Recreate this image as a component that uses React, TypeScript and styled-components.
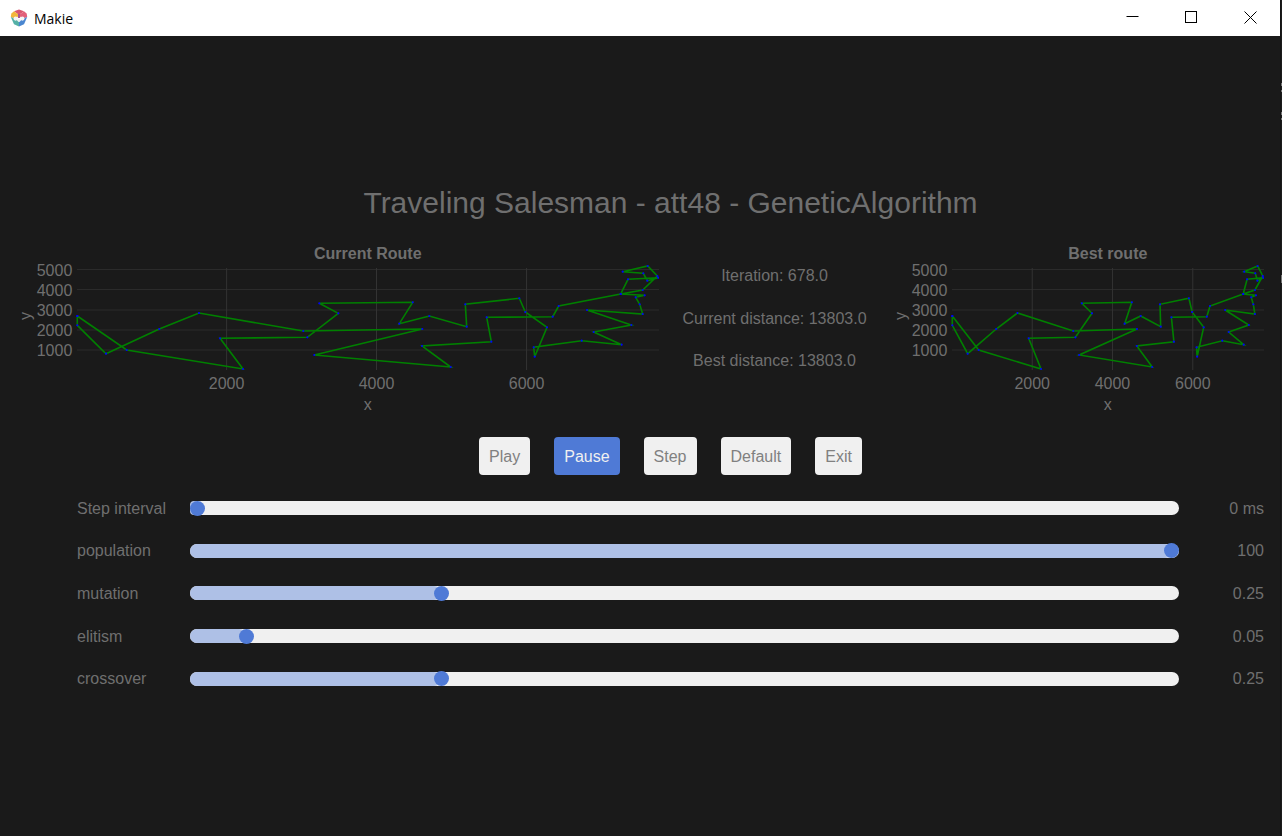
import React from "react";
import styled, { createGlobalStyle } from "styled-components";

const Global = createGlobalStyle`
  html, body { margin: 0; padding: 0; background: #1a1a1a; }
  body { font-family: "Liberation Sans", Arial, sans-serif; overflow: hidden; }
`;

const Screen = styled.div`
  width: 1282px;
  height: 836px;
  display: flex;
  background: #1a1a1a;
  overflow: hidden;
`;

const Edge = styled.div`
  position: relative;
  width: 2px;
  background: #1c1c1c;
  border-left: 1px solid #141414;
  box-sizing: border-box;
`;

const EdgeMark = styled.i<{ $top: number; $height: number }>`
  position: absolute;
  left: 0;
  width: 1px;
  top: ${(p) => p.$top}px;
  height: ${(p) => p.$height}px;
  background: #777;
`;

const Window = styled.div`
  width: 1280px;
  display: flex;
  flex-direction: column;
`;

const TitleBar = styled.header`
  height: 36px;
  background: #fff;
  display: flex;
  align-items: center;
  padding-left: 10px;
  flex: none;
`;

const AppName = styled.span`
  margin-left: 6px;
  font-family: "Open Sans", "Noto Sans", sans-serif;
  font-size: 14px;
  color: #000;
  flex: 1;
`;

const WinButton = styled.div`
  width: 59px;
  height: 36px;
  display: flex;
  align-items: center;
  justify-content: center;
  padding-bottom: 1px;
  box-sizing: border-box;
`;

const Content = styled.main`
  flex: 1;
  padding: 148px 16px 0 77px;
  display: flex;
  flex-direction: column;
  color: #6f6f6f;
`;

const Heading = styled.h1`
  margin: 0;
  height: 36px;
  line-height: 37px;
  font-size: 30px;
  font-weight: 400;
  text-align: center;
  white-space: nowrap;
`;

const PlotRow = styled.section`
  display: flex;
  margin-top: 22px;
  height: 170px;
`;

const ChartSvg = styled.svg<{ $bleed?: boolean }>`
  display: block;
  flex: none;
  margin-left: ${(p) => (p.$bleed ? "-62px" : "0")};
  font-family: "Liberation Sans", Arial, sans-serif;
`;

const TickText = styled.text`
  font-size: 16px;
  fill: #6f6f6f;
`;

const ChartTitle = styled.text`
  font-size: 16px;
  font-weight: 700;
  fill: #6f6f6f;
`;

const Stats = styled.div`
  width: 231px;
  flex: none;
  padding-top: 13px;
  display: flex;
  flex-direction: column;
  align-items: center;
`;

const Stat = styled.div`
  height: 42.5px;
  line-height: 42.5px;
  font-size: 16px;
  white-space: nowrap;
`;

const ButtonRow = styled.div`
  display: flex;
  justify-content: center;
  gap: 24px;
  margin-top: 25px;
`;

const ActionButton = styled.button<{ $active?: boolean }>`
  height: 38px;
  padding: 1px 10px 0;
  border: none;
  border-radius: 4px;
  font-family: "Liberation Sans", Arial, sans-serif;
  font-size: 16px;
  background: ${(p) => (p.$active ? "#4f7ad6" : "#f0f0f0")};
  color: ${(p) => (p.$active ? "#f0f0f0" : "#808080")};
`;

const SliderList = styled.div`
  margin-top: 12px;
  display: flex;
  flex-direction: column;
`;

const SliderRow = styled.div`
  height: 42.6px;
  display: grid;
  grid-template-columns: 113px 989px 1fr;
  align-items: center;
  font-size: 16px;
`;

const SliderLabel = styled.span`
  padding-top: 1px;
  white-space: nowrap;
`;

const SliderValue = styled.span`
  padding-top: 1px;
  text-align: right;
  white-space: nowrap;
`;

const Track = styled.div`
  position: relative;
  height: 14px;
  border-radius: 7px;
  background: #f0f0f0;
`;

const TrackFill = styled.div`
  height: 100%;
  border-radius: 7px;
  background: #aec0e6;
`;

const Thumb = styled.div`
  position: absolute;
  top: -0.5px;
  width: 15px;
  height: 15px;
  margin-left: -7.5px;
  border-radius: 50%;
  background: #4f7ad6;
`;

// route vertices, as screen positions measured off the "Current Route" plot
const ROUTE: [number, number][] = [
  [77.3, 316], [126.7, 350], [243, 369], [220, 338.3], [307.3, 337.3], [338.3, 313.3],
  [319.3, 303.3], [412.7, 302.3], [399.3, 323.7], [429.3, 316], [466.7, 326.7], [465.3, 304.3],
  [519.3, 298.3], [525.3, 312], [547, 327.3], [534.7, 356.7], [533.7, 347.3], [581.7, 340.7],
  [621.7, 344.7], [593.7, 332], [631.3, 325], [587, 310], [642.7, 314], [639.7, 304.3],
  [635.7, 297.3], [644.7, 295.3], [620.7, 294], [628, 279.3], [658.3, 277.7], [647.3, 280.7],
  [643.3, 273.3], [622.7, 271.7], [647.7, 266], [657.3, 276], [642.7, 290], [620.7, 294],
  [558.7, 306], [552.7, 316.7], [486.7, 317.3], [491.3, 341.7], [422, 346], [450.7, 367],
  [314.3, 355], [422.3, 329], [303.3, 331], [199, 313], [159.3, 329], [106, 353.7],
  [77.3, 325.3], [77.3, 316],
];

const X_TICKS = [
  { label: "2000", frac: 0.257 },
  { label: "4000", frac: 0.515 },
  { label: "6000", frac: 0.7733 },
];
const Y_TICKS = [
  { label: "5000", y: 27.5 },
  { label: "4000", y: 47.5 },
  { label: "3000", y: 68 },
  { label: "2000", y: 88 },
  { label: "1000", y: 108 },
];

const GUTTER = 62.3;

function Chart({ title, width, bleed }: { title: string; width: number; bleed?: boolean }) {
  const plotW = width - GUTTER - 0.7;
  const px = (x: number) => GUTTER + ((x - 77.3) / 581) * plotW;
  const py = (y: number) => y - 242;
  const mid = GUTTER + plotW / 2;
  const points = ROUTE.map(([x, y]) => `${px(x).toFixed(1)},${py(y).toFixed(1)}`).join(" ");
  return (
    <ChartSvg $bleed={bleed} width={width} height={170} viewBox={`0 0 ${width} 170`}>
      <ChartTitle x={mid} y={16.5} textAnchor="middle">{title}</ChartTitle>
      {Y_TICKS.map((t) => (
        <line key={t.label} x1={GUTTER - 0.3} x2={width} y1={t.y} y2={t.y} stroke="#2b2b2b" strokeWidth={1} />
      ))}
      {X_TICKS.map((t) => {
        const x = GUTTER + t.frac * plotW;
        return <line key={t.label} x1={x} x2={x} y1={26} y2={128} stroke="#333" strokeWidth={1} />;
      })}
      <polyline points={points} fill="none" stroke="#008000" strokeWidth={1.6} strokeLinejoin="miter" />
      {ROUTE.map(([x, y], i) => (
        <circle key={i} cx={px(x)} cy={py(y)} r={1.1} fill="#0000ff" />
      ))}
      {Y_TICKS.map((t) => (
        <TickText key={t.label} x={GUTTER - 5} y={t.y + 6} textAnchor="end">{t.label}</TickText>
      ))}
      {X_TICKS.map((t) => (
        <TickText key={t.label} x={GUTTER + t.frac * plotW} y={147} textAnchor="middle">{t.label}</TickText>
      ))}
      <TickText x={mid} y={168} textAnchor="middle">x</TickText>
      <TickText x={0} y={0} textAnchor="middle" transform={`translate(${GUTTER - 46.5} 74) rotate(-90)`}>y</TickText>
    </ChartSvg>
  );
}

const SLIDERS = [
  { label: "Step interval", value: "0 ms", frac: 0 },
  { label: "population", value: "100", frac: 1 },
  { label: "mutation", value: "0.25", frac: 0.25 },
  { label: "elitism", value: "0.05", frac: 0.05 },
  { label: "crossover", value: "0.25", frac: 0.25 },
];

const EDGE_MARKS = [
  { top: 83, height: 3 },
  { top: 90, height: 2 },
  { top: 112, height: 3 },
  { top: 118, height: 2 },
  { top: 275, height: 8 },
];

const Logo = () => (
  <svg width="18" height="18" viewBox="0 0 18 18">
    <path d="M9 0.5 L14 2.2 L9 6 L4 2.2 Z" fill="#d9566e" />
    <path d="M4 2.2 L9 6 L6 10 L0.8 8 L1.3 4.6 Z" fill="#f2b63c" />
    <path d="M14 2.2 L9 6 L12 10 L17.2 8 L16.7 4.6 Z" fill="#e2607a" />
    <path d="M0.8 8 L6 10 L9 13 L9 17.5 L4 15.2 Z" fill="#54b0a6" />
    <path d="M17.2 8 L12 10 L9 13 L9 17.5 L14 15.2 Z" fill="#4a86d0" />
    <path d="M9 5 V9" stroke="#a9558f" strokeWidth="2" />
    <circle cx="5.6" cy="9.6" r="2.1" fill="#f4f4f4" />
    <circle cx="12.4" cy="9.6" r="2.1" fill="#f4f4f4" />
    <circle cx="9" cy="11.2" r="1.5" fill="#f0f0f0" />
  </svg>
);

export default function App() {
  return (
    <Screen>
      <Global />
      <Window>
        <TitleBar>
          <Logo />
          <AppName>Makie</AppName>
          <WinButton>
            <svg width="13" height="13" viewBox="0 0 13 13"><path d="M0.5 5.5H12.5" stroke="#000" strokeWidth="1" fill="none" /></svg>
          </WinButton>
          <WinButton>
            <svg width="13" height="13" viewBox="0 0 13 13"><rect x="0.5" y="0.5" width="11" height="11" stroke="#000" strokeWidth="1" fill="none" /></svg>
          </WinButton>
          <WinButton>
            <svg width="13" height="13" viewBox="0 0 13 13"><path d="M0.5 0.5L12.5 12.5M12.5 0.5L0.5 12.5" stroke="#000" strokeWidth="1" fill="none" /></svg>
          </WinButton>
        </TitleBar>
        <Content>
          <Heading>Traveling Salesman - att48 - GeneticAlgorithm</Heading>
          <PlotRow>
            <Chart title="Current Route" width={644} bleed />
            <Stats>
              <Stat>Iteration: 678.0</Stat>
              <Stat>Current distance: 13803.0</Stat>
              <Stat>Best distance: 13803.0</Stat>
            </Stats>
            <Chart title="Best route" width={374} />
          </PlotRow>
          <ButtonRow>
            <ActionButton>Play</ActionButton>
            <ActionButton $active>Pause</ActionButton>
            <ActionButton>Step</ActionButton>
            <ActionButton>Default</ActionButton>
            <ActionButton>Exit</ActionButton>
          </ButtonRow>
          <SliderList>
            {SLIDERS.map((s) => (
              <SliderRow key={s.label}>
                <SliderLabel>{s.label}</SliderLabel>
                <Track>
                  <TrackFill style={{ width: `${7.5 + s.frac * 974}px` }} />
                  <Thumb style={{ left: `${7.5 + s.frac * 974}px` }} />
                </Track>
                <SliderValue>{s.value}</SliderValue>
              </SliderRow>
            ))}
          </SliderList>
        </Content>
      </Window>
      <Edge>
        {EDGE_MARKS.map((m) => (
          <EdgeMark key={m.top} $top={m.top} $height={m.height} />
        ))}
      </Edge>
    </Screen>
  );
}
